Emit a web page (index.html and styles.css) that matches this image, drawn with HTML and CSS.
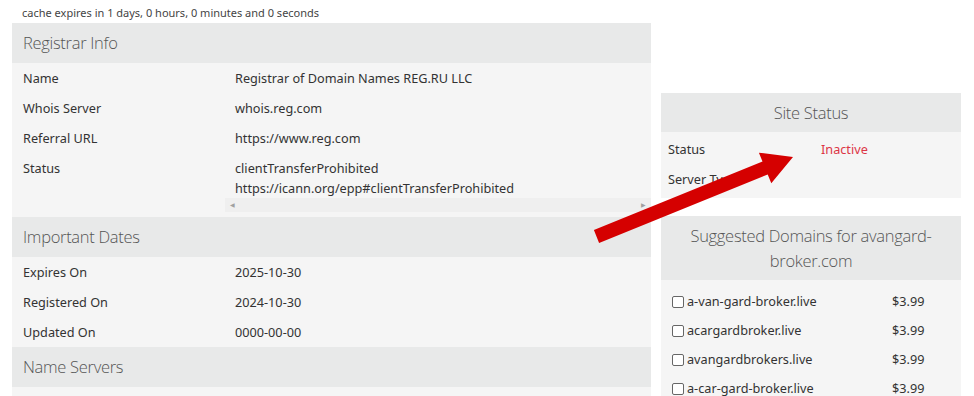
FILE: index.html
```html
<!DOCTYPE html>
<html lang="en">
<head>
  <meta charset="UTF-8" />
  <meta name="viewport" content="width=device-width, initial-scale=1" />
  <title>Whois - avangard-broker.com</title>
  <link rel="stylesheet" href="styles.css">
</head>
<body>
  <div class="cache">cache expires in 1 days, 0 hours, 0 minutes and 0 seconds</div>

  <div class="wrap">
    <div class="main">
      <div class="box-head">Registrar Info</div>
      <div class="kv">
        <div class="k">Name</div><div class="v">Registrar of Domain Names REG.RU LLC</div>
        <div class="k">Whois Server</div><div class="v">whois.reg.com</div>
        <div class="k">Referral URL</div><div class="v">https://www.reg.com</div>
        <div class="k last">Status</div><div class="v last">clientTransferProhibited<br>https://icann.org/epp#clientTransferProhibited</div>
      </div>
      <div class="hscroll"><span>&#9664;</span><span>&#9654;</span></div>

      <div class="box-head">Important Dates</div>
      <div class="kv">
        <div class="k">Expires On</div><div class="v">2025-10-30</div>
        <div class="k">Registered On</div><div class="v">2024-10-30</div>
        <div class="k">Updated On</div><div class="v">0000-00-00</div>
      </div>

      <div class="box-head">Name Servers</div>
    </div>

    <div class="side">
      <div class="side-box">
        <div class="side-head">Site Status</div>
        <div class="side-body">
          <div class="srow"><span>Status</span><span class="inactive">Inactive</span></div>
          <div class="srow"><span>Server Type</span><span></span></div>
        </div>
      </div>

      <div class="side-box">
        <div class="side-head">Suggested Domains for avangard-broker.com</div>
        <div class="side-body domains">
          <div class="drow"><label><input type="checkbox">a-van-gard-broker.live</label><span>$3.99</span></div>
          <div class="drow"><label><input type="checkbox">acargardbroker.live</label><span>$3.99</span></div>
          <div class="drow"><label><input type="checkbox">avangardbrokers.live</label><span>$3.99</span></div>
          <div class="drow"><label><input type="checkbox">a-car-gard-broker.live</label><span>$3.99</span></div>
        </div>
      </div>
    </div>
  </div>

  <!-- fleche rouge par-dessus -->
  <svg class="arrow" width="974" height="396" viewBox="0 0 974 396">
    <polygon points="593.9,230 762.5,161.5 758.9,152.7 793,157 771.3,183.3 767.7,174.5 599.1,243" fill="#d50000"/>
  </svg>
</body>
</html>
```

FILE: styles.css
```css
body {
  font-family: "Noto Sans", "Open Sans", sans-serif;
  font-size: 12.7px;
  color: #333;
  background: #fff;
  margin: 0;
  height: 396px;
  overflow: hidden;
  position: relative;
}
.cache {
  font-size: 11px;
  color: #444;
  height: 23px;
  line-height: 26px;
  padding-left: 22px;
}
.wrap {
  display: flex;
  gap: 10px;
  padding: 0 13px 0 12px;
  align-items: flex-start;
}
.main {
  width: 639px;
  background: #f5f5f5;
  height: 400px;
}
.box-head {
  background: #e8e9e9;
  height: 40px;
  line-height: 40px;
  padding: 0 11px;
  font-family: "Open Sans", "Noto Sans", sans-serif;
  font-weight: 300;
  font-size: 16.5px;
  letter-spacing: -0.3px;
  color: #555;
}
.kv {
  display: grid;
  grid-template-columns: 212px 1fr;
}
.k, .v {
  padding: 5px 11px;
  line-height: 20px;
  white-space: nowrap;
}
.k.last, .v.last {
  padding-bottom: 0;
}
.hscroll {
  margin-left: 213px;
  height: 14px;
  background: #efefef;
  display: flex;
  justify-content: space-between;
  align-items: center;
  padding: 0 5px;
  margin-bottom: 5px;
  font-size: 6px;
  color: #a0a0a0;
}
.side {
  width: 300px;
  margin-top: 70px;
  display: flex;
  flex-direction: column;
  gap: 18px;
}
.side-box {
  background: #f5f5f5;
}
.side-head {
  background: #e8e9e9;
  text-align: center;
  font-family: "Open Sans", "Noto Sans", sans-serif;
  font-weight: 300;
  font-size: 16.5px;
  letter-spacing: -0.3px;
  color: #555;
  line-height: 25px;
  padding: 7px 10px;
}
.side-body {
  padding: 2px 7px 4px;
}
.srow {
  display: grid;
  grid-template-columns: 153px 1fr;
  height: 30px;
  line-height: 30px;
}
.inactive {
  color: #dc3545;
}
.domains {
  padding: 7px 11px 0;
}
.drow {
  display: grid;
  grid-template-columns: 220px 1fr;
  height: 29px;
  line-height: 29px;
}
.drow label {
  display: flex;
  align-items: center;
}
.drow input {
  appearance: none;
  width: 12px;
  height: 12px;
  border: 1px solid #666;
  border-radius: 2px;
  background: #fff;
  margin: 0 3px 0 0;
}
.arrow {
  position: absolute;
  left: 0;
  top: 0;
  pointer-events: none;
}
```
